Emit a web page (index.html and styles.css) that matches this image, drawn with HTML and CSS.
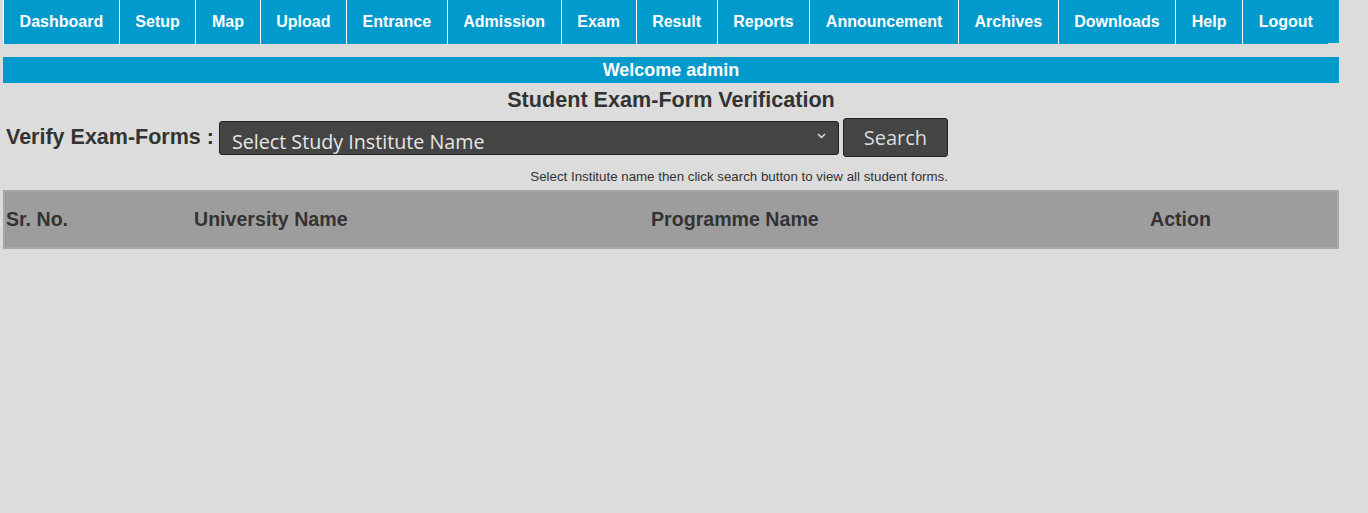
FILE: index.html
```html
<!DOCTYPE html>
<html>
<head>
<meta charset="utf-8">
<link rel="stylesheet" href="styles.css">
</head>
<body>
<div class="page">
  <ul class="nav">
    <li>Dashboard</li>
    <li>Setup</li>
    <li>Map</li>
    <li>Upload</li>
    <li>Entrance</li>
    <li>Admission</li>
    <li>Exam</li>
    <li>Result</li>
    <li>Reports</li>
    <li>Announcement</li>
    <li>Archives</li>
    <li>Downloads</li>
    <li>Help</li>
    <li class="last">Logout</li>
  </ul>
  <div class="welcome">Welcome admin</div>
  <h1 class="title">Student Exam-Form Verification</h1>
  <div class="form">
    <div class="row">
      <label class="label">Verify Exam-Forms :</label>
      <div class="select">
        <span class="select-text">Select Study Institute Name</span>
        <svg class="chev" width="9" height="6" viewBox="0 0 9 6"><path d="M1 1 L4.5 4.5 L8 1" fill="none" stroke="#dddddd" stroke-width="1.5"/></svg>
      </div>
      <button class="search">Search</button>
    </div>
    <div class="hint">Select Institute name then click search button to view all student forms.</div>
  </div>
  <div class="thead">
    <div class="th c1">Sr. No.</div>
    <div class="th c2">University Name</div>
    <div class="th c3">Programme Name</div>
    <div class="th c4">Action</div>
  </div>
</div>
</body>
</html>
```
FILE: styles.css
```css
html, body {
  margin: 0;
  padding: 0;
  background: #dcdcdc;
  font-family: "Liberation Sans", Arial, sans-serif;
  color: #333333;
}
.page {
  width: 1336px;
  margin-left: 3px;
}
.nav {
  list-style: none;
  margin: 0;
  padding: 0;
  display: flex;
  height: 43px;
  background: #009acd;
}
.nav li {
  height: 44px;
  line-height: 43px;
  padding: 0 15.6px;
  border-left: 1px solid #ffffff;
  color: #ffffff;
  font-weight: bold;
  font-size: 16px;
  background: #009acd;
}
.welcome {
  margin-top: 14px;
  height: 26px;
  line-height: 26px;
  background: #009acd;
  color: #ffffff;
  font-weight: bold;
  font-size: 18px;
  text-align: center;
}
.title {
  margin: 4px 0 0 0;
  height: 26px;
  line-height: 26px;
  font-size: 21.6px;
  font-weight: bold;
  text-align: center;
  color: #333333;
}
.form {
  display: inline-flex;
  flex-direction: column;
  padding-left: 3px;
  margin-top: 5px;
}
.row {
  display: flex;
  align-items: center;
  height: 39px;
}
.label {
  font-size: 21.5px;
  font-weight: bold;
  color: #333333;
  margin-right: 5px;
}
.select {
  position: relative;
  width: 618px;
  height: 32px;
  background: #444444;
  border: 1px solid #222222;
  border-radius: 3px;
  overflow: hidden;
}
.select-text {
  display: block;
  padding-left: 12px;
  padding-top: 6px;
  font-family: "Open Sans", sans-serif;
  font-size: 19.7px;
  line-height: 28px;
  color: #e6e6e6;
  white-space: nowrap;
}
.chev {
  position: absolute;
  right: 12px;
  top: 11px;
}
.search {
  margin-left: 4px;
  width: 105px;
  height: 39px;
  background: #444444;
  border: 1px solid #222222;
  border-radius: 3px;
  color: #dddddd;
  font-family: "Open Sans", sans-serif;
  font-size: 20px;
  padding: 0;
}
.hint {
  text-align: right;
  font-size: 13.3px;
  margin-top: 12px;
  line-height: 16px;
  color: #333333;
}
.thead {
  margin-top: 5px;
  display: grid;
  grid-template-columns: 189px 457px 499px 1fr;
  height: 55px;
  align-items: center;
  background: #9d9d9d;
  border: 2px solid #a8a8a8;
}
.th {
  font-size: 19.6px;
  font-weight: bold;
  color: #333333;
}
.c1 {
  padding-left: 1px;
}
```
